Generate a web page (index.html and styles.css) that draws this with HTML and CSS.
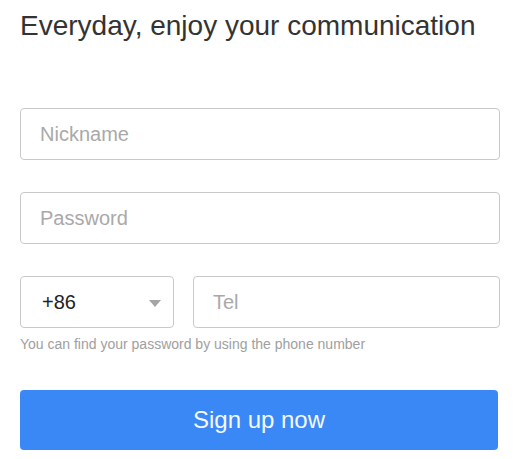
FILE: index.html
```html
<!DOCTYPE html>
<html lang="en">
<head>
  <meta charset="UTF-8" />
  <meta name="viewport" content="width=device-width, initial-scale=1.0"/>
  <title>Sign up</title>
  <link rel="stylesheet" href="styles.css">
</head>
<body>
  <div class="signup">
    <h1>Everyday, enjoy your communication</h1>

    <!-- Registration form -->
    <form class="form" onsubmit="return false">
      <input class="field" type="text" placeholder="Nickname">
      <input class="field" type="password" placeholder="Password">

      <div class="phone-row">
        <div class="code-select">
          <span>+86</span>
          <span class="caret"></span>
        </div>
        <input class="field tel" type="tel" placeholder="Tel">
      </div>
      <p class="hint">You can find your password by using the phone number</p>

      <button class="submit-btn" type="submit">Sign up now</button>
    </form>
  </div>
</body>
</html>
```

FILE: styles.css
```css
body {
  margin: 0;
  padding: 0;
  background: #fff;
  font-family: "Liberation Sans", Arial, sans-serif;
  color: #333;
}

.signup {
  padding: 6px 16px 0 20px;
  width: 480px;
}

.signup h1 {
  margin: 0;
  font-size: 28px;
  font-weight: normal;
  line-height: 40px;
  color: #333;
}

.form {
  margin-top: 62px;
  display: flex;
  flex-direction: column;
}

.field {
  box-sizing: border-box;
  height: 52px;
  width: 480px;
  margin: 0 0 32px;
  padding: 0 19px;
  border: 1px solid #c9c9c9;
  border-radius: 4px;
  font-family: inherit;
  font-size: 20px;
  color: #333;
  outline: none;
}

.field::placeholder {
  color: #a9a9a9;
}

.phone-row {
  display: flex;
  gap: 19px;
}

.phone-row .field {
  margin: 0;
}

.code-select {
  box-sizing: border-box;
  width: 154px;
  height: 52px;
  padding: 0 12px 0 21px;
  border: 1px solid #c9c9c9;
  border-radius: 4px;
  display: flex;
  align-items: center;
  justify-content: space-between;
  font-size: 20px;
  color: #222;
}

.caret {
  width: 0;
  height: 0;
  border-left: 6px solid transparent;
  border-right: 6px solid transparent;
  border-top: 7px solid #a5a5a5;
  margin-top: 2px;
}

.tel {
  flex: 1;
  width: auto;
}

.hint {
  margin: 8px 0 0;
  font-size: 14px;
  line-height: 16px;
  color: #a0a0a0;
}

.submit-btn {
  margin-top: 38px;
  width: 478px;
  height: 60px;
  border: none;
  border-radius: 4px;
  background: #3a88f6;
  color: #f4f9ff;
  font-family: inherit;
  font-size: 24px;
  cursor: pointer;
}
```
